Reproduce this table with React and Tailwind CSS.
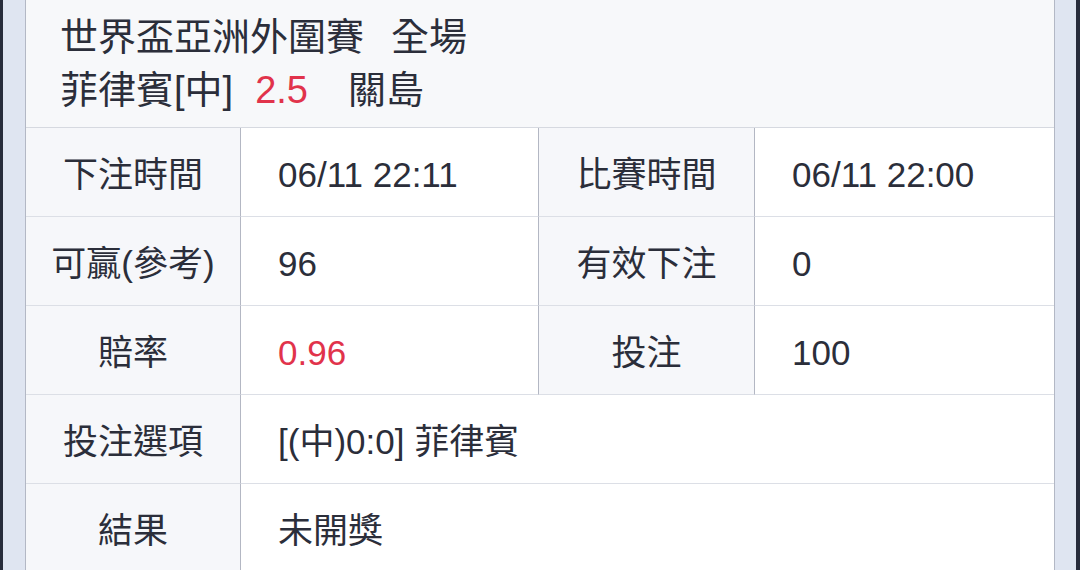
import React from "react";

const font = { fontFamily: '"Liberation Sans", "Noto Sans CJK TC", sans-serif' };

function LabelCell({ children, last }) {
  return (
    <div className={`flex items-center justify-center pt-[4px] bg-[#f6f7fa] border-r border-r-[#b3b7c3] ${last ? "" : "border-b border-b-[#dcdfe6]"} h-[89px]`}>
      {children}
    </div>
  );
}

function ValueCell({ children, last, right, span }) {
  return (
    <div className={`flex items-center pl-[37px] pt-[4px] bg-white ${right ? "" : "border-r border-r-[#b3b7c3]"} ${last ? "" : "border-b border-b-[#dcdfe6]"} h-[89px] ${span ? "col-span-3" : ""}`}>
      {children}
    </div>
  );
}

export default function App() {
  return (
    <div className="flex h-[570px] w-[1080px] overflow-hidden text-[#2b2e3a]" style={font}>
      <div className="w-[3px] bg-[#272c3b]" />
      <div className="w-[22px] bg-[#dfe5f1]" />
      <div className="flex-1 flex flex-col border-l border-r border-[#b3b8c5] bg-[#f7f8fa]">
        <div className="h-[128px] shrink-0 border-b border-[#d6d9e0] pl-[34px] pt-[11px] text-[38px] leading-[53px]">
          <div>
            世界盃亞洲外圍賽<span className="ml-[27px]">全場</span>
          </div>
          <div>
            菲律賓[中]<span className="ml-[22px] text-[#e1334b]">2.5</span>
            <span className="ml-[40px]">關島</span>
          </div>
        </div>
        <div className="grid grid-cols-[215px_298px_216px_1fr] text-[35px] leading-none">
          <LabelCell>下注時間</LabelCell>
          <ValueCell>06/11 22:11</ValueCell>
          <LabelCell>比賽時間</LabelCell>
          <ValueCell right>06/11 22:00</ValueCell>

          <LabelCell>可贏(參考)</LabelCell>
          <ValueCell>96</ValueCell>
          <LabelCell>有效下注</LabelCell>
          <ValueCell right>0</ValueCell>

          <LabelCell>賠率</LabelCell>
          <ValueCell><span className="text-[#e1334b]">0.96</span></ValueCell>
          <LabelCell>投注</LabelCell>
          <ValueCell right>100</ValueCell>

          <LabelCell>投注選項</LabelCell>
          <ValueCell right span>[(中)0:0] 菲律賓</ValueCell>

          <LabelCell last>結果</LabelCell>
          <ValueCell right span last>未開獎</ValueCell>
        </div>
        <div className="flex-1 bg-white" />
      </div>
      <div className="w-[21px] bg-[#dfe5f1]" />
      <div className="w-[4px] bg-[#272c3b]" />
    </div>
  );
}
